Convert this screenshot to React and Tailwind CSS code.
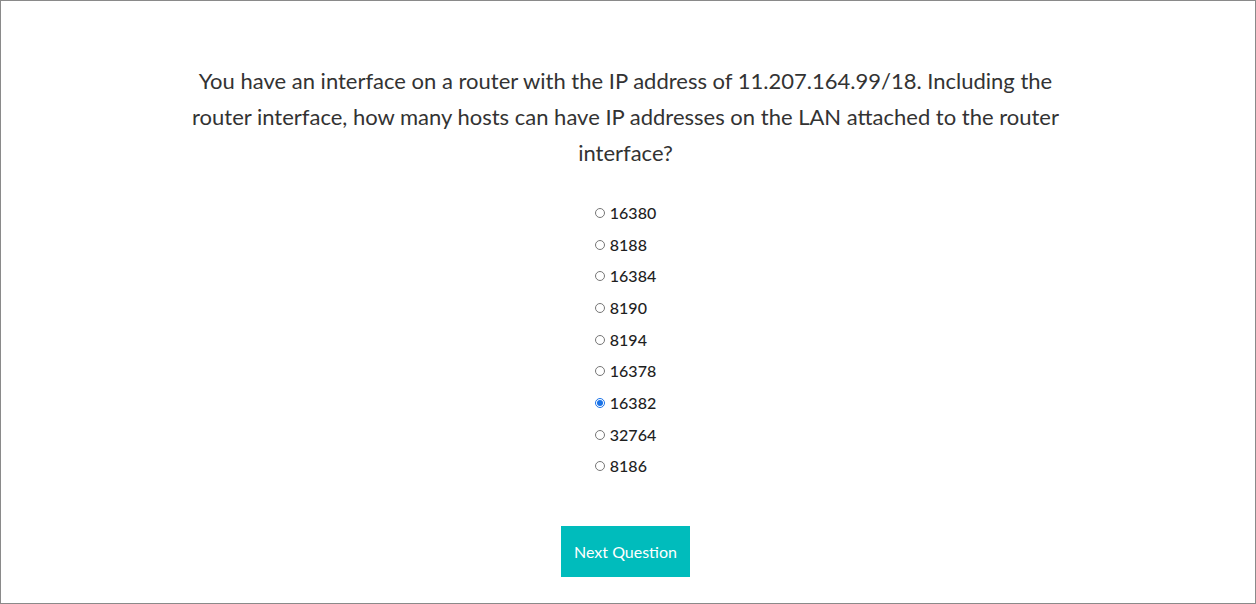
import React, { useState } from "react";

const options = ["16380", "8188", "16384", "8190", "8194", "16378", "16382", "32764", "8186"];

export default function App() {
  const [sel, setSel] = useState("16382");
  return (
    <div className="w-[1256px] h-[604px] border border-[#8a8a8a] bg-white box-border flex flex-col items-center pr-[5px]" style={{ fontFamily: "Lato, 'Noto Sans', sans-serif" }}>
      <p className="mt-[62px] w-[872px] text-center text-[22px] leading-[36px] text-[#333333]">
        You have an interface on a router with the IP address of 11.207.164.99/18. Including the router interface, how many hosts can have IP addresses on the LAN attached to the router interface?
      </p>
      <div className="mt-[26px] flex flex-col items-start">
        {options.map((o) => (
          <label key={o} className="flex items-center h-[31.7px] text-[16px] text-[#1f1f1f] font-medium cursor-pointer">
            <input
              type="radio"
              name="q"
              checked={sel === o}
              onChange={() => setSel(o)}
              className="w-[10px] h-[10px] mr-[5px] accent-[#1a73e8]"
            />
            {o}
          </label>
        ))}
      </div>
      <button className="mt-[44px] w-[129px] h-[51px] bg-[#00bcbc] text-white text-[16px]">
        Next Question
      </button>
    </div>
  );
}
